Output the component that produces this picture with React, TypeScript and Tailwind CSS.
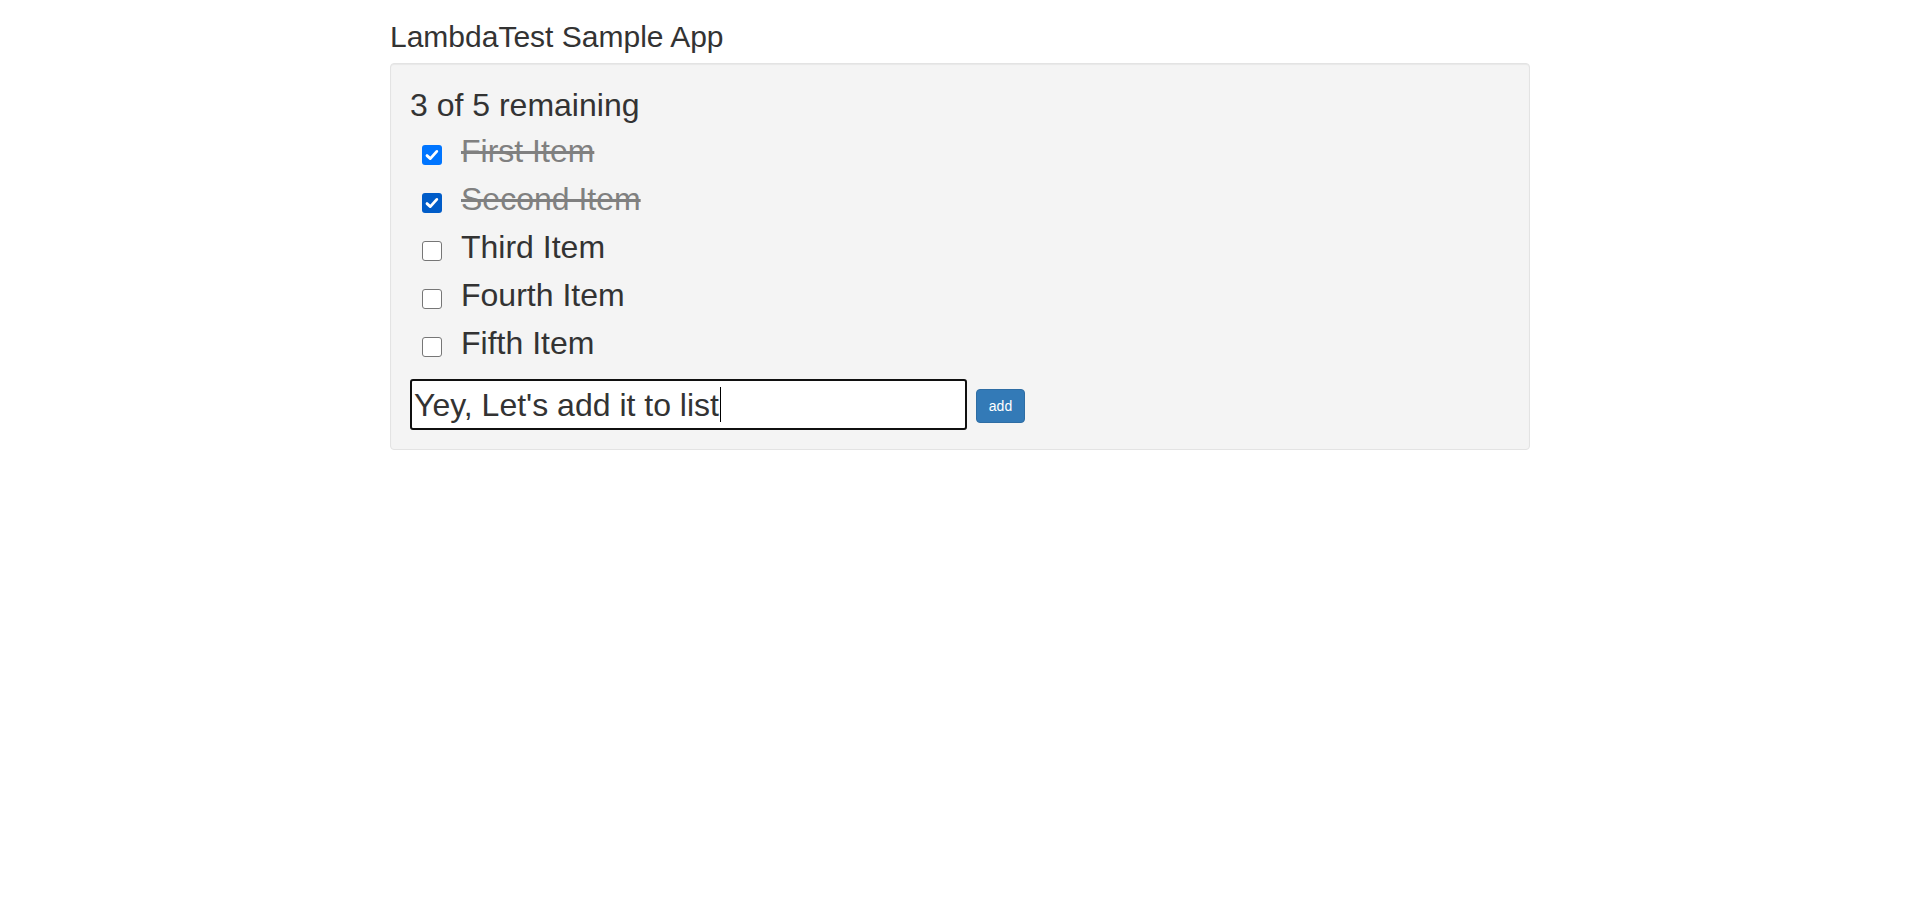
import React from "react";

type Item = { text: string; done: boolean; tone?: "a" | "b" };

const items: Item[] = [
  { text: "First Item", done: true, tone: "a" },
  { text: "Second Item", done: true, tone: "b" },
  { text: "Third Item", done: false },
  { text: "Fourth Item", done: false },
  { text: "Fifth Item", done: false },
];

function Box({ item }: { item: Item }) {
  if (item.done) {
    return (
      <span
        className={
          "mt-[18px] ml-[12px] flex h-[20px] w-[20px] shrink-0 items-center justify-center rounded-[3px] " +
          (item.tone === "a" ? "bg-[#0075ff]" : "bg-[#005cc8]")
        }
      >
        <svg width="16" height="16" viewBox="0 0 16 16">
          <path
            d="M3 8.6 L6.3 11.6 L12.8 4.4"
            fill="none"
            stroke="#ffffff"
            strokeWidth="2.8"
            strokeLinecap="round"
            strokeLinejoin="round"
          />
        </svg>
      </span>
    );
  }
  return (
    <span className="mt-[18px] ml-[12px] h-[20px] w-[20px] shrink-0 rounded-[3px] border border-[#767676] bg-white" />
  );
}

export default function App() {
  return (
    <div className="min-h-[924px] bg-white font-['Liberation_Sans',Arial,sans-serif] text-[#333333]">
      <div className="mx-auto w-[1170px] px-[15px]">
        <h2 className="mt-[20px] mb-[10px] text-[30px] leading-[33px] font-normal">
          LambdaTest Sample App
        </h2>
        <div className="rounded-[4px] border border-[#e3e3e3] bg-[#f4f4f4] p-[19px] shadow-[inset_0_1px_1px_rgba(0,0,0,0.05)]">
          <div className="text-[32px] leading-[44px]">3 of 5 remaining</div>
          <ul className="m-0 list-none p-0">
            {items.map((it) => (
              <li key={it.text} className="flex h-[48px] items-start">
                <Box item={it} />
                <span
                  className={
                    "ml-[19px] text-[32px] leading-[48px] " +
                    (it.done ? "text-[#808080] line-through" : "text-[#333333]")
                  }
                >
                  {it.text}
                </span>
              </li>
            ))}
          </ul>
          <div className="mt-[12px] flex items-start">
            <div className="flex h-[51px] w-[557px] items-center rounded-[3px] border-2 border-[#101010] bg-white pl-[2px] text-[32px] text-[#333333]">
              <span className="whitespace-pre">Yey, Let's add it to list</span>
              <span className="ml-[1px] h-[35px] w-[1px] bg-black" />
            </div>
            <button
              type="button"
              className="mt-[10px] ml-[9px] h-[34px] w-[49px] rounded-[4px] border border-[#2e6da4] bg-[#337ab7] text-[14px] leading-[20px] text-white"
            >
              add
            </button>
          </div>
        </div>
      </div>
    </div>
  );
}
